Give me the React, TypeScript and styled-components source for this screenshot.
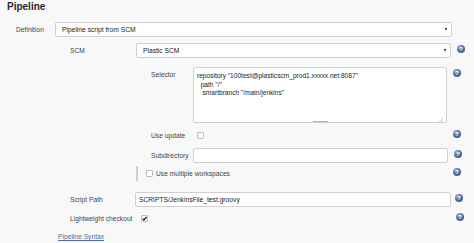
import styled, { createGlobalStyle } from 'styled-components';

const GlobalStyle = createGlobalStyle`
  html, body {
    margin: 0;
    padding: 0;
    background: #f8f8f8;
  }
  body {
    font-family: "Liberation Sans", Arial, sans-serif;
    color: #333;
  }
`

const Page = styled.div`
  width: 474px;
  height: 243px;
  overflow: hidden;
  display: flex;
  flex-direction: column;
  background: #f8f8f8;
`
const Title = styled.h2`
  margin: 0;
  height: 15px;
  padding-left: 7px;
  font-size: 10px;
  font-weight: bold;
  line-height: 14px;
  color: #2a2a2a;
`
const Row = styled.div<{ $indent: number; $label: number; $field: number; $mt: number }>`
  display: grid;
  grid-template-columns: ${p => p.$label}px ${p => p.$field}px auto;
  align-items: start;
  padding-left: ${p => p.$indent}px;
  margin-top: ${p => p.$mt}px;
`
const Label = styled.div`
  font-size: 6.7px;
  line-height: 15px;
  color: #444;
  white-space: nowrap;
`
const Select = styled.div`
  height: 15px;
  box-sizing: border-box;
  border: 1px solid #cfcfcf;
  border-radius: 2px;
  background: #fff;
  display: flex;
  align-items: center;
  justify-content: space-between;
  padding: 0 4px 0 6px;
  font-size: 6.7px;
  color: #222;
`
const Arrow = styled.span`
  width: 0;
  height: 0;
  border-left: 1.5px solid transparent;
  border-right: 1.5px solid transparent;
  border-top: 3px solid #111;
`
const Input = styled.div`
  height: 15px;
  box-sizing: border-box;
  border: 1px solid #cfcfcf;
  border-radius: 2px;
  background: #fff;
  display: flex;
  align-items: center;
  padding: 0 3px;
  font-size: 6.7px;
  color: #222;
`
const TextArea = styled.div`
  height: 56px;
  box-sizing: border-box;
  border: 1px solid #cfcfcf;
  border-radius: 2px;
  background: #fff;
  display: flex;
  flex-direction: column;
  justify-content: space-between;
  padding: 4px 3px 0;
  font-size: 6.6px;
  line-height: 8.5px;
  color: #222;
  white-space: pre;
`
const Grip = styled.div`
  display: flex;
  align-items: flex-end;
  justify-content: space-between;
  height: 5px;
`
const GripBar = styled.span`
  width: 15px;
  height: 1px;
  margin-left: 116px;
  background: #b5b5b5;
`
const Resize = styled.svg`
  width: 5px;
  height: 5px;
`
const Help = styled.span<{ $ml?: number }>`
  width: 8px;
  height: 8px;
  margin-top: 1.5px;
  margin-left: ${p => p.$ml ?? 6}px;
  border-radius: 50%;
  background: radial-gradient(circle at 35% 30%, #9db4d8 0%, #4f72aa 45%, #2b4b83 100%);
  color: #fff;
  font-size: 6px;
  font-weight: bold;
  line-height: 8px;
  text-align: center;
  display: block;
`
const CheckCell = styled.div<{ $ml: number }>`
  height: 15px;
  display: flex;
  align-items: center;
  padding-left: ${p => p.$ml}px;
`
const Box = styled.span`
  width: 5px;
  height: 5px;
  border: 1px solid #bdbdbd;
  border-radius: 1px;
  background: #fff;
  display: flex;
  align-items: center;
  justify-content: center;
`
const Optional = styled.div`
  height: 15px;
  border-left: 2px solid #cfcfcf;
  display: flex;
  align-items: center;
  gap: 3px;
  padding-left: 8px;
  font-size: 6.7px;
  color: #444;
`
const SyntaxLink = styled.a`
  margin-top: 3px;
  padding-left: 58px;
  font-size: 6.7px;
  line-height: 15px;
  color: #4a6ea8;
  text-decoration: underline;
`

const Check = ({ checked }: { checked?: boolean }) => (
  <Box>
    {checked && (
      <svg width="5" height="5" viewBox="0 0 5 5">
        <path d="M0.6 2.6 L1.9 4 L4.5 0.8" stroke="#111" strokeWidth="1.2" fill="none" />
      </svg>
    )}
  </Box>
)

const HelpIcon = ({ ml }: { ml?: number }) => <Help $ml={ml}>?</Help>

const selector = `repository "100test@plasticscm_prod1.xxxxx.net:8087"
  path "/"
   smartbranch "/main/jenkins"`

export default function App() {
  return (
    <Page>
      <GlobalStyle />
      <Title>Pipeline</Title>

      <Row $indent={16} $label={39} $field={397} $mt={8}>
        <Label>Definition</Label>
        <Select>Pipeline script from SCM<Arrow /></Select>
      </Row>

      <Row $indent={70} $label={66} $field={315} $mt={6}>
        <Label>SCM</Label>
        <Select>Plastic SCM<Arrow /></Select>
        <HelpIcon />
      </Row>

      <Row $indent={151} $label={42} $field={254} $mt={9}>
        <Label>Selector</Label>
        <TextArea>
          <span>{selector}</span>
          <Grip>
            <GripBar />
            <Resize viewBox="0 0 5 5">
              <path d="M1 5 L5 1 M3 5 L5 3" stroke="#aaa" strokeWidth="0.6" />
            </Resize>
          </Grip>
        </TextArea>
        <HelpIcon />
      </Row>

      <Row $indent={151} $label={42} $field={254} $mt={5}>
        <Label>Use update</Label>
        <CheckCell $ml={4}><Check /></CheckCell>
        <HelpIcon />
      </Row>

      <Row $indent={151} $label={42} $field={255} $mt={5}>
        <Label>Subdirectory</Label>
        <Input />
        <HelpIcon />
      </Row>

      <Row $indent={136} $label={0} $field={311} $mt={3}>
        <span />
        <Optional><Check />Use multiple workspaces</Optional>
        <HelpIcon />
      </Row>

      <Row $indent={70} $label={65} $field={316} $mt={11}>
        <Label>Script Path</Label>
        <Input>SCRIPTS/JenkinsFile_test.groovy</Input>
        <HelpIcon ml={4} />
      </Row>

      <Row $indent={70} $label={70} $field={311} $mt={4}>
        <Label>Lightweight checkout</Label>
        <CheckCell $ml={1}><Check checked /></CheckCell>
        <HelpIcon ml={5} />
      </Row>

      <SyntaxLink href="#">Pipeline Syntax</SyntaxLink>
    </Page>
  )
}
